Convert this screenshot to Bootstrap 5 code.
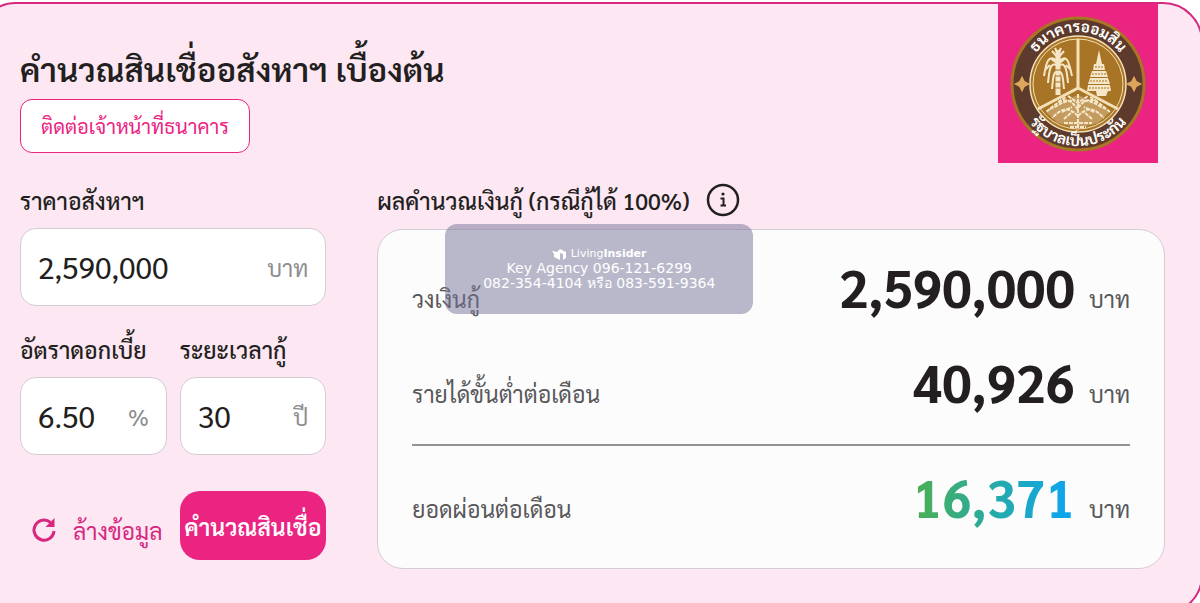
<!DOCTYPE html>
<html lang="th">
<head>
<meta charset="utf-8">
<meta name="viewport" content="width=device-width, initial-scale=1">
<title>คำนวณสินเชื่ออสังหาฯ เบื้องต้น</title>
<link href="https://cdn.jsdelivr.net/npm/bootstrap@5.3.0/dist/css/bootstrap.min.css" rel="stylesheet">
<style>
  :root { --gsb: #eb2482; --edge: #d6287e; }
  body { font-family: "Sarabun", "Noto Sans CJK JP", "Noto Sans Thai Looped", "Noto Sans Thai", sans-serif; color: #231f20; background: #fff; overflow: hidden; }
  .calc { margin: 2px -3px 0 -24px; padding: 0 36px 44px 42px; border: 2px solid var(--edge); border-radius: 40px; background: #fce7f3; }
  .calc-title { font-size: 33px; line-height: 48px; font-weight: 600; margin: 41px 0 6px; }
  .bank-mark { width: 160px; height: 159px; margin-right: 7px; background: var(--gsb); }
  .contact-btn { height: 54px; padding: 0 20px; border: 1px solid var(--gsb); border-radius: 12px; background: #fff; color: var(--gsb); font-size: 20px; line-height: 30px; }
  .calc-grid { display: grid; grid-template-columns: minmax(0, 28fr) minmax(0, 72fr); column-gap: 51px; margin-top: 20px; }
  .cap { display: block; font-size: 23px; line-height: 34px; font-weight: 500; white-space: nowrap; }
  .field { height: 78px; margin-top: 11px; padding: 0 17px; background: #fff; border: 1px solid #d3cdd3; border-radius: 16px; }
  .field input { min-width: 0; flex: 1 1 0; border: 0; padding: 0; background: transparent; font-size: 30px; line-height: 44px; color: #231f20; outline: 0; }
  .unit { font-size: 23px; line-height: 36px; color: #8e8e90; }
  .pair { display: grid; grid-template-columns: minmax(0, 1fr) minmax(0, 1fr); column-gap: 13px; }
  .second { margin-top: 26px; }
  .actions { margin-top: 36px; }
  .reset-btn { border: 0; padding: 0 0 0 11px; margin: 8px 0 0; background: transparent; color: var(--edge); font-size: 23px; line-height: 36px; white-space: nowrap; }
  .go-btn { height: 69px; border: 0; padding: 0; border-radius: 20px; background: var(--gsb); color: #fff; font-size: 23px; line-height: 36px; font-weight: 600; white-space: nowrap; }
  .result { margin-top: 12px; height: 340px; padding: 24px 34px 0; border: 1px solid #d3cdd3; border-radius: 26px; background: #fdfcfd; }
  .result-row { line-height: 64px; white-space: nowrap; }
  .result-row + .result-row { margin-top: 19px; }
  .result-row .what, .result-row .baht { font-size: 23px; color: #58585a; }
  .sum { font-size: 52px; font-weight: 700; margin-right: 14px; }
  .sum-month { background: linear-gradient(90deg, #4caf50, #26aaa8 50%, #0aa5f5); -webkit-background-clip: text; background-clip: text; color: transparent; }
  .result hr { margin: 19px 0 18px; border: 0; border-top: 2px solid #939394; opacity: 1; }
  .stamp { position: absolute; left: 68px; top: -5px; width: 308px; height: 90px; border-radius: 12px; background: rgba(117, 116, 152, .5); color: #fff; font: 14px/15px "DejaVu Sans", sans-serif; padding-top: 22px; white-space: nowrap; }
  .stamp-brand { font-size: 11px; }
</style>
</head>
<body>
<main class="calc">
  <header class="d-flex justify-content-between align-items-start">
    <div>
      <h1 class="calc-title">คำนวณสินเชื่ออสังหาฯ เบื้องต้น</h1>
      <button type="button" class="contact-btn">ติดต่อเจ้าหน้าที่ธนาคาร</button>
    </div>
    <svg class="bank-mark" viewBox="0 0 160 159" role="img" aria-label="ธนาคารออมสิน">
      <defs>
        <path id="arcTop" d="M28 80 A52 52 0 0 1 132 80"/>
        <path id="arcBottom" d="M18 80 A62 62 0 0 0 142 80"/>
      </defs>
      <circle cx="80" cy="80" r="66" fill="#5d3a2b" stroke="#a87425" stroke-width="3"/>
      <circle cx="80" cy="80" r="48" fill="#a87425" stroke="#f3dfb8" stroke-width="1.500"/>
      <circle cx="80" cy="80" r="45" fill="none" stroke="#f3dfb8" stroke-width="1"/>
      <path d="M80 35V84L40 105M80 84L120 105" fill="none" stroke="#f3dfb8" stroke-width="3"/>
      <g stroke="#f6e6c8" fill="none" stroke-width="2">
        <path d="M60 46V91" stroke-width="5"/>
        <path d="M60 58C50 48 48 60 46 72M60 58C70 48 71 60 74 72M60 62C52 56 51 68 50 79M60 62C68 56 69 68 70 79M60 68C55 66 55 76 54 85M60 68C65 66 65 76 66 85M54 47l6 7 6-7M52 54l8 6 8-6M57 44l3 6 3-6M47 66l5-5M73 66l-5-5"/>
        <path d="M57 66h6M57 72h6M57 78h6M57 84h6" stroke="#a87425" stroke-width="1"/>
      </g>
      <path d="M101 46l3 14h-6zM96 60h10l1 6H95zM94 67h14l2 6H92zM92 74h18l2 6H90zM90 81h22l1 6H89zM98 87h12l-2 5h-9z" fill="#f6e6c8"/>
      <path d="M97 63h8M94 70h14M92 77h18M91 84h20" stroke="#a87425" stroke-dasharray="2 1"/>
      <path d="M80 91L92 96L112 108L100 119L80 124L60 119L48 108L68 96z" fill="#f6e6c8" opacity=".35"/>
      <g fill="none" stroke="#f6e6c8" stroke-width="2" stroke-dasharray="4 1">
        <path d="M80 90v32M80 106C70 90 62 96 48 108M80 104C90 90 98 96 112 108M80 112C70 102 64 104 54 114M80 112C90 102 96 104 106 114M74 97C66 96 60 102 52 105M86 97C94 96 100 102 108 105M70 92l10 7 10-7M60 98l8-5M92 93l8 5M66 115l8-7M94 115l-8-7M64 108l10-5M96 108l-10-5M66 119h28M72 123h16"/>
      </g>
      <path d="M24 74l2 4 4 2-4 2-2 4-2-4-4-2 4-2zM136 74l2 4 4 2-4 2-2 4-2-4-4-2 4-2z" fill="#dca75a" stroke="#dca75a" stroke-width="2"/>
      <g fill="#fff" font-size="15" font-weight="700" text-anchor="middle">
        <text><textPath href="#arcTop" startOffset="50%">ธนาคารออมสิน</textPath></text>
        <text><textPath href="#arcBottom" startOffset="50%">รัฐบาลเป็นประกัน</textPath></text>
      </g>
    </svg>
  </header>

  <div class="calc-grid">
    <form>
      <label class="cap" for="price">ราคาอสังหาฯ</label>
      <div class="field d-flex align-items-center">
        <input id="price" type="text" value="2,590,000"><span class="unit">บาท</span>
      </div>
      <div class="pair second">
        <div>
          <label class="cap" for="rate">อัตราดอกเบี้ย</label>
          <div class="field d-flex align-items-center">
            <input id="rate" type="text" value="6.50"><span class="unit">%</span>
          </div>
        </div>
        <div>
          <label class="cap" for="years">ระยะเวลากู้</label>
          <div class="field d-flex align-items-center">
            <input id="years" type="text" value="30"><span class="unit">ปี</span>
          </div>
        </div>
      </div>
      <div class="pair actions">
        <button type="reset" class="reset-btn d-flex align-items-center">
          <svg class="me-3" width="26" height="26" viewBox="0 0 26 26" fill="none" aria-hidden="true"><path d="M23 14A10 10 0 1 1 19.500 5.500" stroke="currentColor" stroke-width="3"/><path d="M23.500 1v9h-9z" fill="currentColor"/></svg>
          ล้างข้อมูล
        </button>
        <button type="button" class="go-btn">คำนวณสินเชื่อ</button>
      </div>
    </form>

    <section>
      <div class="cap d-flex align-items-center">
        <span>ผลคำนวณเงินกู้ (กรณีกู้ได้ 100%)</span>
        <svg class="ms-3" width="34" height="34" viewBox="0 0 34 34" fill="none" role="img" aria-label="ข้อมูล"><circle cx="17" cy="17" r="15" stroke="#231f20" stroke-width="2.500"/><circle cx="17" cy="11" r="1.600" fill="#231f20"/><path d="M14.500 15.500h3v7M14.500 22.500h5.500" stroke="#231f20" stroke-width="2"/></svg>
      </div>
      <div class="position-relative">
        <div class="result">
          <div class="result-row d-flex align-items-baseline"><span class="what me-auto">วงเงินกู้</span><span class="sum">2,590,000</span><span class="baht">บาท</span></div>
          <div class="result-row d-flex align-items-baseline"><span class="what me-auto">รายได้ขั้นต่ำต่อเดือน</span><span class="sum">40,926</span><span class="baht">บาท</span></div>
          <hr>
          <div class="result-row d-flex align-items-baseline"><span class="what me-auto">ยอดผ่อนต่อเดือน</span><span class="sum sum-month">16,371</span><span class="baht">บาท</span></div>
        </div>
        <div class="stamp text-center">
          <div class="stamp-brand"><svg width="15" height="11" viewBox="0 0 15 11" aria-hidden="true"><path d="M0 2l5 1 3-3 6 3v6l-3 2V5L8 4v7L2 8V5z" fill="#fff"/></svg> Living<b>Insider</b></div>
          <div>Key Agency 096-121-6299</div>
          <div>082-354-4104 หรือ 083-591-9364</div>
        </div>
      </div>
    </section>
  </div>
</main>
<script src="https://cdn.jsdelivr.net/npm/bootstrap@5.3.0/dist/js/bootstrap.bundle.min.js"></script>
</body>
</html>
